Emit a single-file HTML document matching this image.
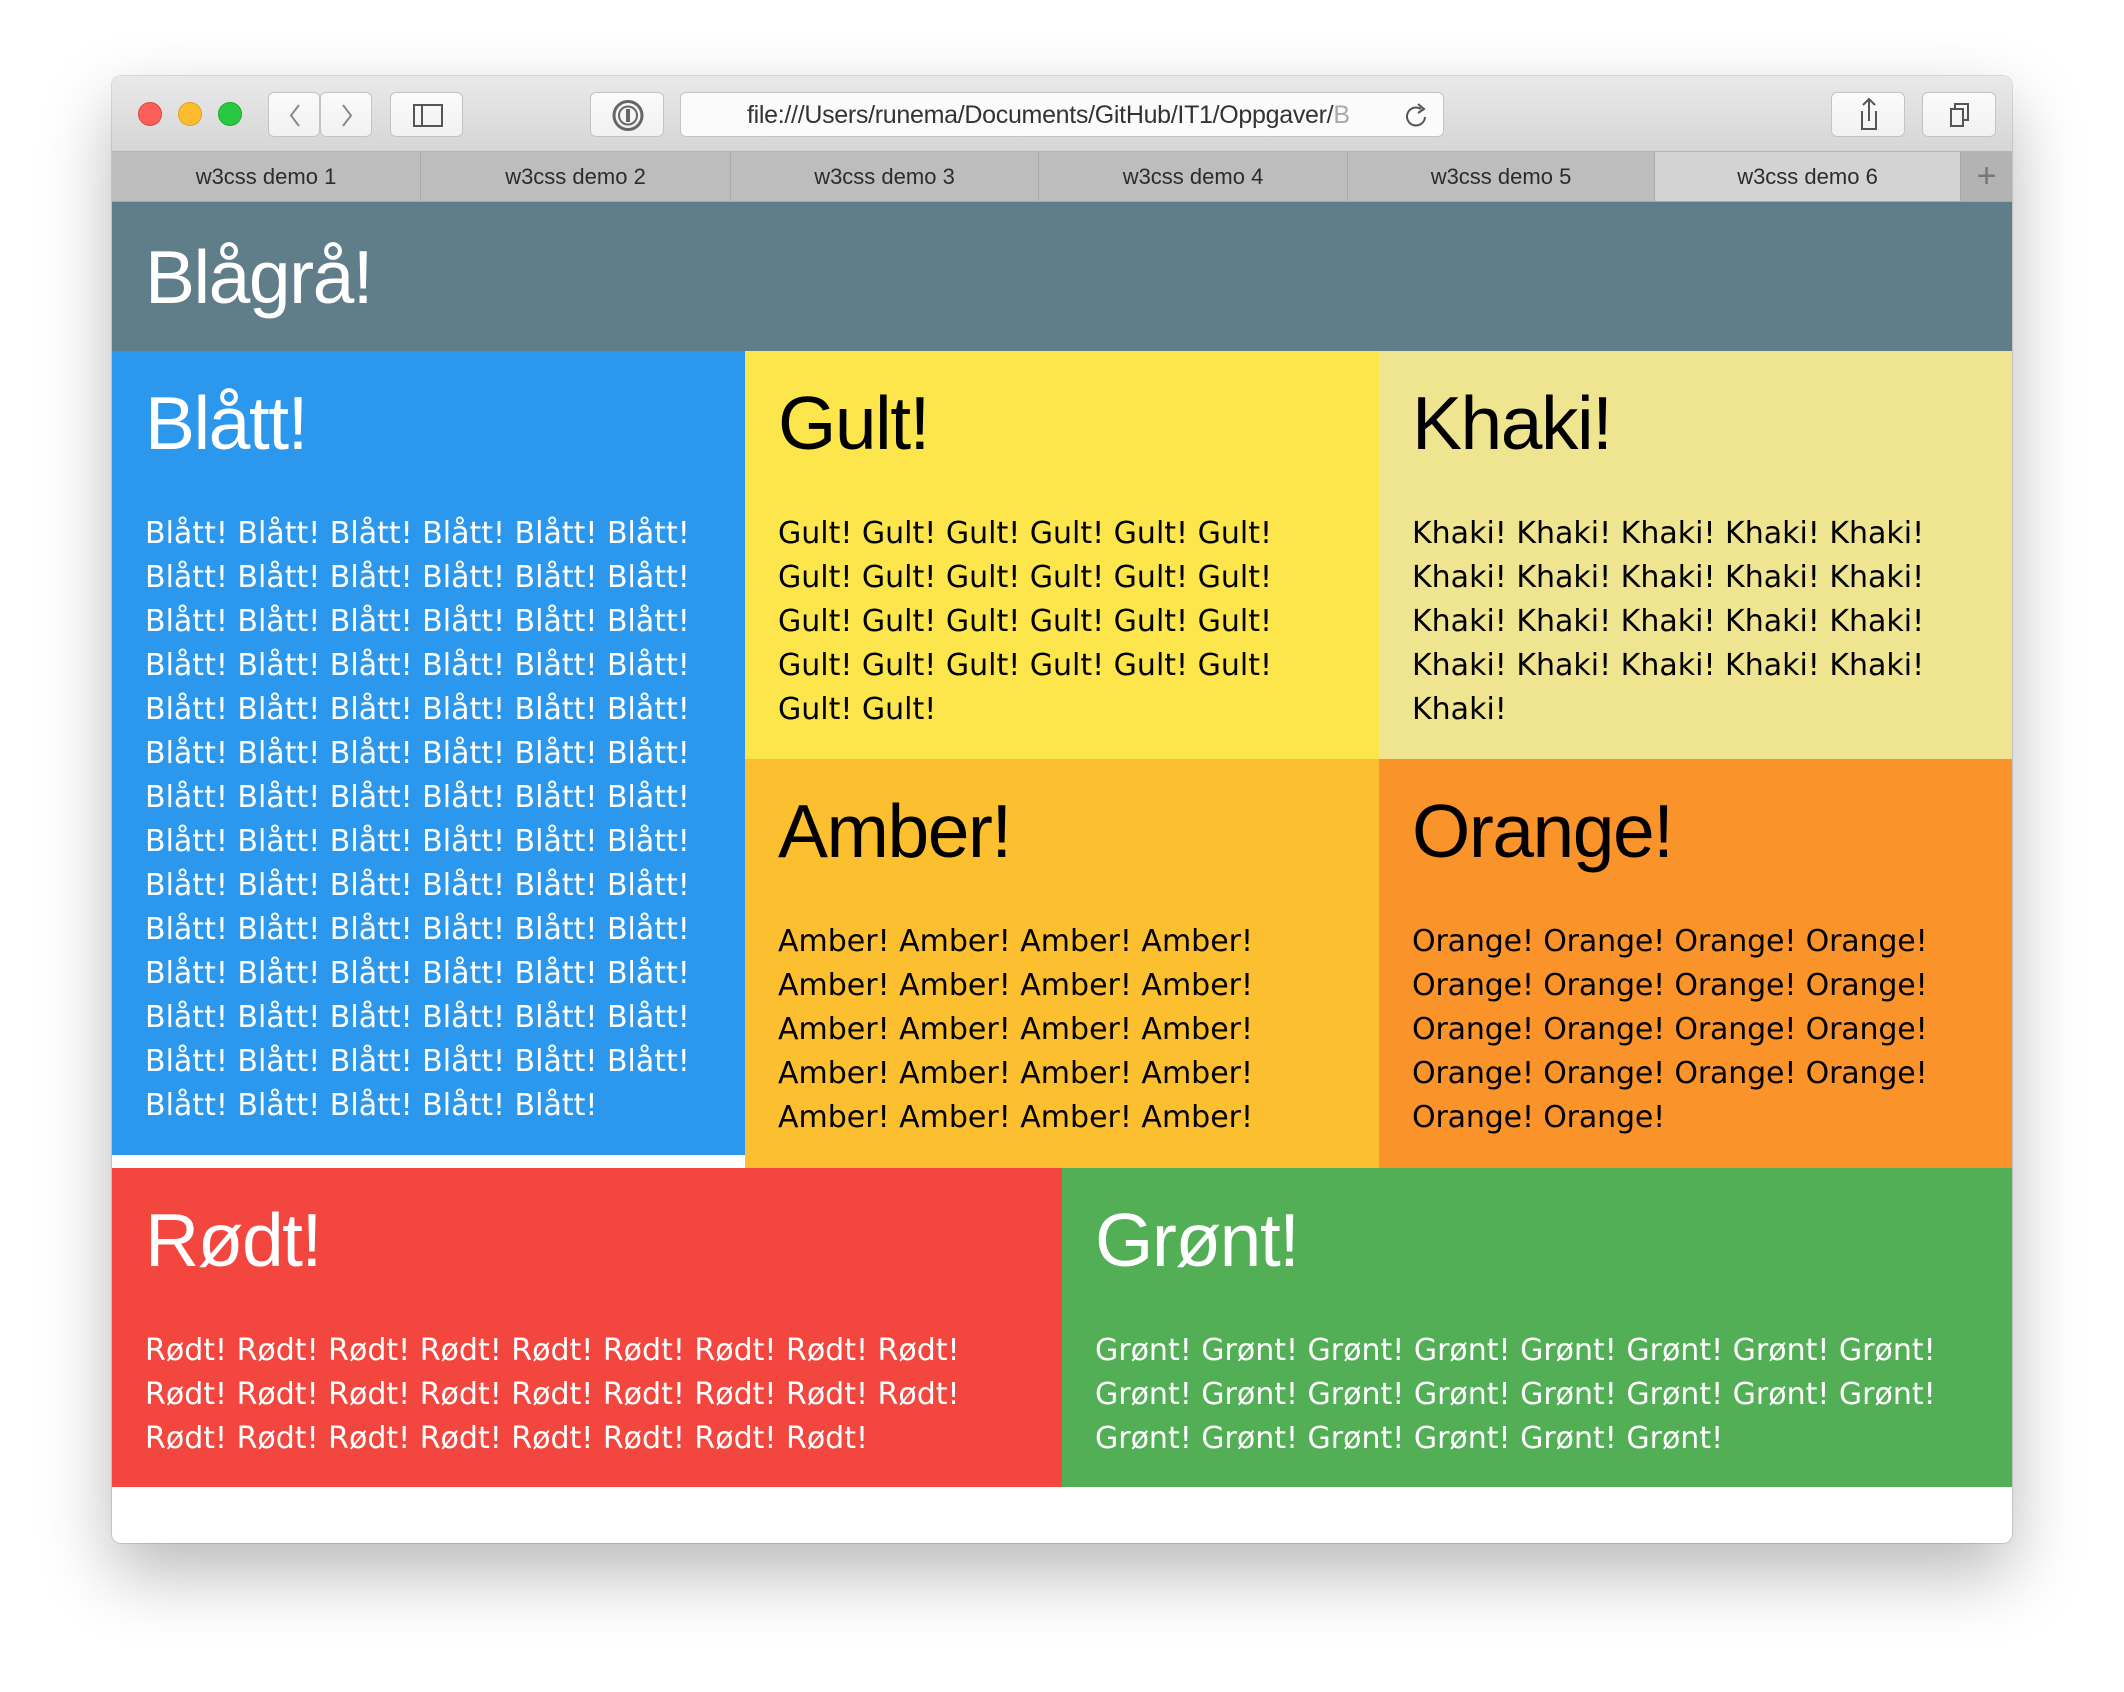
<!DOCTYPE html>
<html><head><meta charset="utf-8"><style>
*{margin:0;padding:0;box-sizing:border-box}
body{width:2124px;height:1692px;background:#fff;position:relative;overflow:hidden;font-family:"Liberation Sans",sans-serif}
.win{position:absolute;left:112px;top:76px;width:1900px;height:1467px;border-radius:9px;overflow:hidden;box-shadow:0 30px 70px rgba(0,0,0,0.28),0 0 0 1px rgba(0,0,0,0.12);background:#fff}
.tb{position:absolute;left:0;top:0;width:1900px;height:76px;background:linear-gradient(#e9e9e9,#d6d6d6);border-bottom:1px solid #b5b5b5}
.dot{position:absolute;top:26px;width:24px;height:24px;border-radius:50%}
.btn{position:absolute;top:16px;height:45px;background:linear-gradient(#fbfbfb,#f1f1f1);border:1px solid #c4c4c4;border-radius:6px}
.tabs{position:absolute;left:0;top:76px;width:1900px;height:50px;background:#bdbdbd;border-bottom:1px solid #a8a8a8}
.tab{position:absolute;top:0;height:49px;border-right:1px solid #a9a9a9;font-size:22px;color:#2c2c2c;text-align:center;line-height:49px}
.a{position:absolute;overflow:hidden}
.h{position:absolute;font-size:75px;line-height:75px;white-space:nowrap;letter-spacing:-1.5px}
.p{position:absolute;font-family:"DejaVu Sans",Verdana,sans-serif;font-size:30px;line-height:44px;white-space:pre}
.w{color:#fff}.k{color:#000}
</style></head><body>
<div class="win">
<div class="tb">
<div class="dot" style="left:26px;background:#fc5f57;border:1px solid #e0443e"></div>
<div class="dot" style="left:66px;background:#fdbc2e;border:1px solid #dea123"></div>
<div class="dot" style="left:106px;background:#29c840;border:1px solid #1aab29"></div>
<div class="btn" style="left:156px;width:52px"><svg width="52" height="45"><path d="M30 12 L22 22.5 L30 33" stroke="#8a8a8a" stroke-width="2" fill="none"/></svg></div>
<div class="btn" style="left:208px;width:52px"><svg width="52" height="45"><path d="M22 12 L30 22.5 L22 33" stroke="#8a8a8a" stroke-width="2" fill="none"/></svg></div>
<div class="btn" style="left:278px;width:73px"><svg width="73" height="45"><rect x="23" y="12" width="28" height="21" stroke="#555" stroke-width="2" fill="none"/><line x1="31" y1="12" x2="31" y2="33" stroke="#555" stroke-width="2"/></svg></div>
<div class="btn" style="left:478px;width:74px"><svg width="74" height="45"><circle cx="37" cy="22.5" r="14" stroke="#666" stroke-width="3" fill="none"/><circle cx="37" cy="22.5" r="9" stroke="#666" stroke-width="2" fill="none"/><rect x="35" y="16" width="4" height="13" fill="#666"/></svg></div>
<div class="btn" style="left:568px;width:764px;background:#fbfbfb"><div style="position:absolute;left:66px;top:1px;line-height:43px;font-size:25px;color:#333;white-space:nowrap;width:620px;overflow:hidden;letter-spacing:-0.3px">file:///Users/runema/Documents/GitHub/IT1/Oppgaver/<span style="color:#aaa">B</span></div><svg style="position:absolute;left:720px;top:8px" width="30" height="30"><path d="M20 8 A9 9 0 1 0 24 16" stroke="#555" stroke-width="2" fill="none"/><path d="M17 3 L23 8 L17 12" stroke="#555" stroke-width="2" fill="none"/></svg></div>
<div class="btn" style="left:1719px;width:74px"><svg width="74" height="45"><path d="M30 18 L30 36 L44 36 L44 18" stroke="#555" stroke-width="2" fill="none"/><path d="M37 28 L37 6 M31 12 L37 6 L43 12" stroke="#555" stroke-width="2" fill="none"/></svg></div>
<div class="btn" style="left:1810px;width:74px"><svg width="74" height="45"><rect x="28" y="16" width="12" height="17" stroke="#555" stroke-width="2" fill="none"/><path d="M32 16 L32 11 L45 11 L45 27 L40 27" stroke="#555" stroke-width="2" fill="none"/></svg></div>
</div>
<div class="tabs">
<div class="tab" style="left:0;width:309px">w3css demo 1</div>
<div class="tab" style="left:309px;width:310px">w3css demo 2</div>
<div class="tab" style="left:619px;width:308px">w3css demo 3</div>
<div class="tab" style="left:927px;width:309px">w3css demo 4</div>
<div class="tab" style="left:1236px;width:307px">w3css demo 5</div>
<div class="tab" style="left:1543px;width:306px;background:#d3d3d3">w3css demo 6</div>
<div class="tab" style="left:1849px;width:51px;border:none;font-size:34px;color:#777;background:#b3b3b3">+</div>
</div>
</div>
<div class="a" style="left:112px;top:202px;width:1900px;height:149px;background:#607d8a"></div>
<div class="h w" style="left:145px;top:240px">Blågrå!</div>

<div class="a" style="left:112px;top:351px;width:633px;height:804px;background:#2b98ee"></div>
<div class="h w" style="left:145px;top:386px">Blått!</div>
<div class="p w" style="left:145px;top:512px">Blått! Blått! Blått! Blått! Blått! Blått!
Blått! Blått! Blått! Blått! Blått! Blått!
Blått! Blått! Blått! Blått! Blått! Blått!
Blått! Blått! Blått! Blått! Blått! Blått!
Blått! Blått! Blått! Blått! Blått! Blått!
Blått! Blått! Blått! Blått! Blått! Blått!
Blått! Blått! Blått! Blått! Blått! Blått!
Blått! Blått! Blått! Blått! Blått! Blått!
Blått! Blått! Blått! Blått! Blått! Blått!
Blått! Blått! Blått! Blått! Blått! Blått!
Blått! Blått! Blått! Blått! Blått! Blått!
Blått! Blått! Blått! Blått! Blått! Blått!
Blått! Blått! Blått! Blått! Blått! Blått!
Blått! Blått! Blått! Blått! Blått!</div>

<div class="a" style="left:745px;top:351px;width:634px;height:408px;background:#fce64c"></div>
<div class="h k" style="left:778px;top:386px">Gult!</div>
<div class="p k" style="left:778px;top:512px">Gult! Gult! Gult! Gult! Gult! Gult!
Gult! Gult! Gult! Gult! Gult! Gult!
Gult! Gult! Gult! Gult! Gult! Gult!
Gult! Gult! Gult! Gult! Gult! Gult!
Gult! Gult!</div>

<div class="a" style="left:1379px;top:351px;width:633px;height:408px;background:#efe48f"></div>
<div class="h k" style="left:1412px;top:386px">Khaki!</div>
<div class="p k" style="left:1412px;top:512px">Khaki! Khaki! Khaki! Khaki! Khaki!
Khaki! Khaki! Khaki! Khaki! Khaki!
Khaki! Khaki! Khaki! Khaki! Khaki!
Khaki! Khaki! Khaki! Khaki! Khaki!
Khaki!</div>

<div class="a" style="left:745px;top:759px;width:634px;height:409px;background:#fbbf2f"></div>
<div class="h k" style="left:778px;top:794px">Amber!</div>
<div class="p k" style="left:778px;top:920px">Amber! Amber! Amber! Amber!
Amber! Amber! Amber! Amber!
Amber! Amber! Amber! Amber!
Amber! Amber! Amber! Amber!
Amber! Amber! Amber! Amber!</div>

<div class="a" style="left:1379px;top:759px;width:633px;height:409px;background:#fa942a"></div>
<div class="h k" style="left:1412px;top:794px">Orange!</div>
<div class="p k" style="left:1412px;top:920px;letter-spacing:-0.15px">Orange! Orange! Orange! Orange!
Orange! Orange! Orange! Orange!
Orange! Orange! Orange! Orange!
Orange! Orange! Orange! Orange!
Orange! Orange!</div>

<div class="a" style="left:112px;top:1168px;width:950px;height:319px;background:#f2463e"></div>
<div class="h w" style="left:145px;top:1203px">Rødt!</div>
<div class="p w" style="left:145px;top:1329px">Rødt! Rødt! Rødt! Rødt! Rødt! Rødt! Rødt! Rødt! Rødt!
Rødt! Rødt! Rødt! Rødt! Rødt! Rødt! Rødt! Rødt! Rødt!
Rødt! Rødt! Rødt! Rødt! Rødt! Rødt! Rødt! Rødt!</div>

<div class="a" style="left:1062px;top:1168px;width:950px;height:319px;background:#52af56"></div>
<div class="h w" style="left:1095px;top:1203px">Grønt!</div>
<div class="p w" style="left:1095px;top:1329px">Grønt! Grønt! Grønt! Grønt! Grønt! Grønt! Grønt! Grønt!
Grønt! Grønt! Grønt! Grønt! Grønt! Grønt! Grønt! Grønt!
Grønt! Grønt! Grønt! Grønt! Grønt! Grønt!</div>
</body></html>
